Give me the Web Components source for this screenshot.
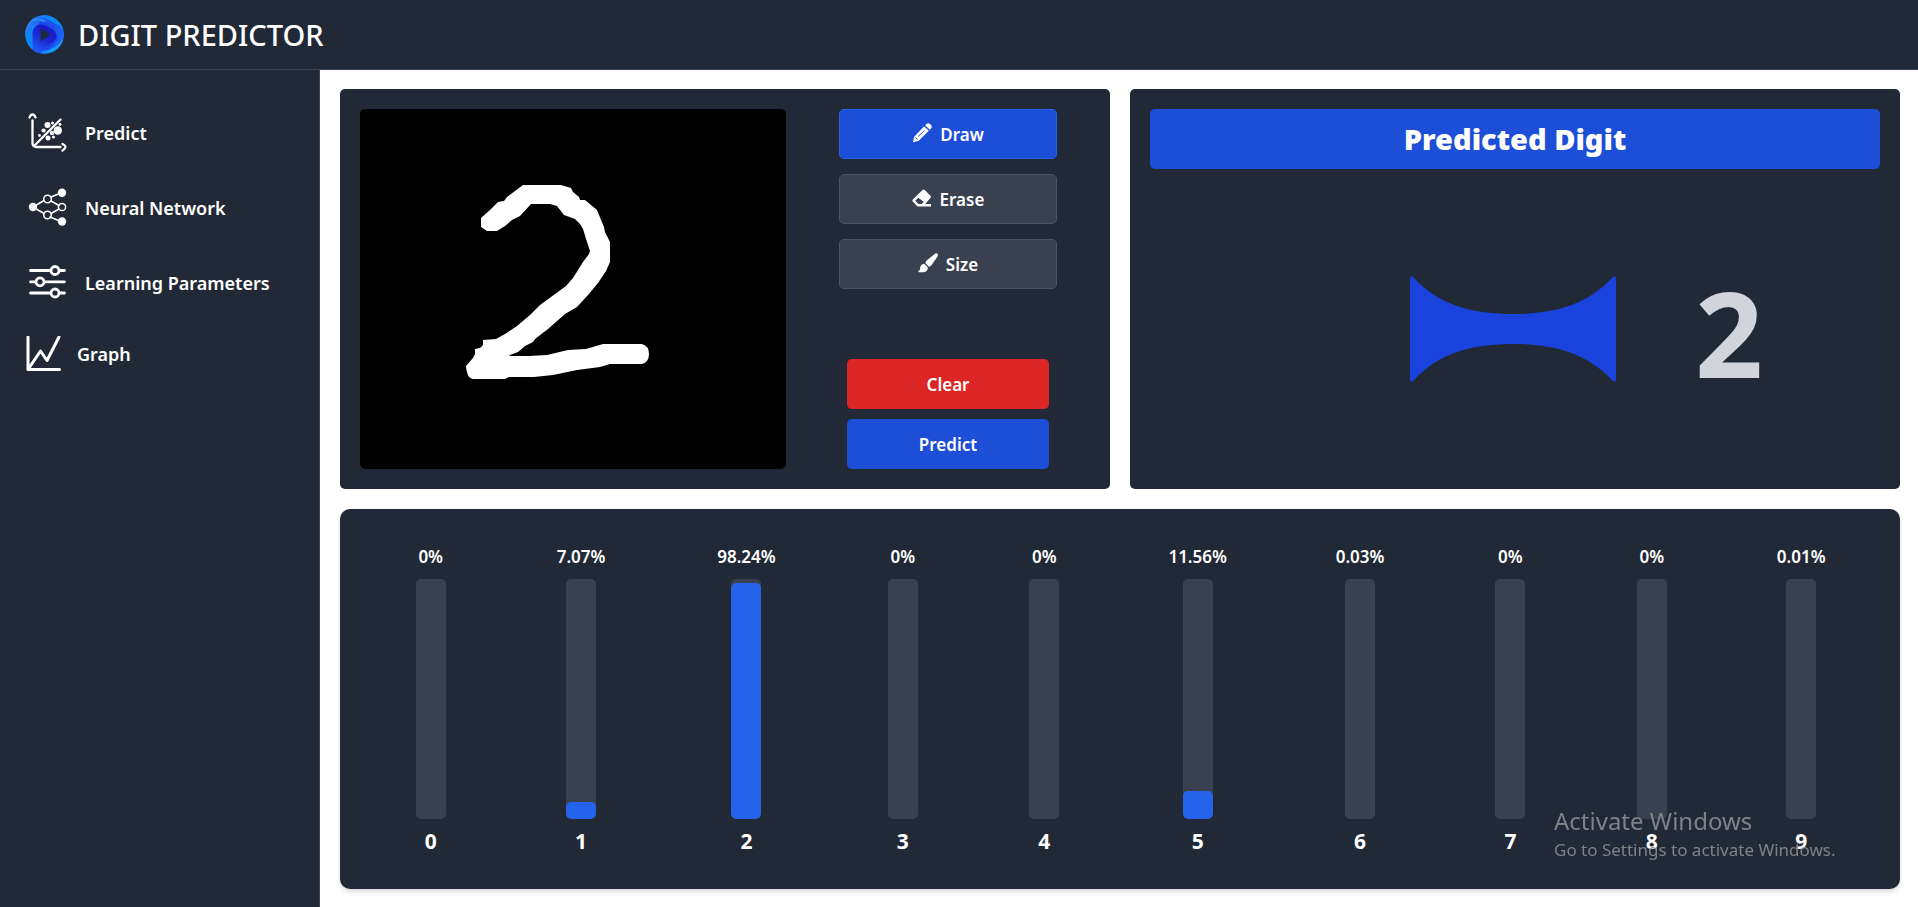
<!DOCTYPE html>
<html lang="en">
<head>
<meta charset="utf-8">
<meta name="viewport" content="width=device-width, initial-scale=1">
<title>Digit Predictor</title>
<style>
  html, body { margin: 0; min-height: 100%; background: #fff; }
  body { font-family: "Noto Sans", "Open Sans", sans-serif; color: #fff; }
</style>
</head>
<body>
<digit-app></digit-app>
<script>
const define = (name, html, setup) => customElements.define(name, class extends HTMLElement {
  constructor() {
    super();
    this.attachShadow({ mode: 'open' }).innerHTML = html;
  }
  connectedCallback() { if (setup) setup(this, this.shadowRoot); }
});

define('app-header', `
<style>
  :host { display: flex; align-items: center; gap: 14px; height: 70px; box-sizing: border-box;
    padding: 0 24px; background: #212936; border-bottom: 1px solid #374151; }
  svg { width: 40px; height: 40px; flex: none; }
  h1 { margin: 0; font-size: 29px; line-height: 40px; font-weight: 500; white-space: nowrap; }
</style>
<svg viewBox="0 0 40 40" aria-hidden="true">
  <defs>
    <linearGradient id="a" x1="0" y1="0" x2="1" y2="1"><stop offset="0" stop-color="#1c7cf6"/><stop offset=".4" stop-color="#0a86fb"/><stop offset="1" stop-color="#0a93ff"/></linearGradient>
    <linearGradient id="b" gradientUnits="userSpaceOnUse" x1="6" y1="8" x2="36" y2="24"><stop offset="0" stop-color="#2a7bf2"/><stop offset=".5" stop-color="#1d4bee"/><stop offset="1" stop-color="#1b62f5"/></linearGradient>
    <linearGradient id="c" gradientUnits="userSpaceOnUse" x1="12" y1="36" x2="28" y2="14"><stop offset="0" stop-color="#1d5cf2"/><stop offset=".6" stop-color="#1b22cf"/><stop offset="1" stop-color="#1a18c4"/></linearGradient>
    <clipPath id="d"><circle cx="20.500" cy="19.500" r="19.500"/></clipPath>
  </defs>
  <g clip-path="url(#d)" fill="none" stroke-linecap="round" stroke-linejoin="round">
    <circle cx="20.500" cy="19.500" r="19.500" fill="url(#a)"/>
    <path d="M2 13Q9 2 22 8L33 14Q39 20 33 26L16 36" stroke="url(#b)" stroke-width="8"/>
    <path d="M12 18v20q8 0 14-5l8-8-4-14-14-5z" fill="#1b48ea"/>
    <path d="M12.500 34V18q1-6 7-4l7 4q4 3 0 6l-9 6-4 5" stroke="url(#c)" stroke-width="8"/>
    <path d="M1 11Q8 1 20 6M39 25Q32 37 18 37" stroke="#20a8ff" stroke-width="2" opacity=".6"/>
  </g>
  <path d="M16.500 14v12.500l10-6.500q-4-5-10-6z" fill="#1d2a40"/>
</svg>
<h1><slot></slot></h1>
`);

define('nav-link', `
<style>
  :host { display: block; }
  a { display: flex; align-items: center; gap: 18px; height: 75px; color: #fff; text-decoration: none;
    font-size: 18px; line-height: 28px; font-weight: 600; white-space: nowrap; }
  :host([compact]) a { height: 68px; gap: 16px; }
  :host([compact]) { margin-left: -3px; }
</style>
<a href="#"><slot name="icon"></slot><slot></slot></a>
`);

define('app-sidebar', `
<style>
  :host { display: block; box-sizing: border-box; background: #212936; border-right: 1px solid #374151; padding: 25px 20px 20px 28px; }
  svg { width: 39px; height: 39px; display: block; flex: none; fill: none; stroke: #fff; stroke-linecap: round; stroke-linejoin: round; }
  .f { fill: #fff; stroke: none; }
  .graph { width: 36px; height: 36px; }
</style>
<nav>
  <nav-link><svg slot="icon" viewBox="0 0 39 39" stroke-width="2.300" aria-hidden="true">
    <path d="M1.500 4.500Q2.500 1.500 4.500 1.500T7.500 4.500M4.500 7.500V30c0 3 1 4 4 4h24M34.500 31Q37.500 32.500 37.500 34T34.500 37.500M6 33 32.500 6.500"/>
    <g class="f"><circle cx="19.500" cy="12" r="3"/><circle cx="15.500" cy="17.500" r="2.100"/><circle cx="11.500" cy="22.500" r="1.400"/><circle cx="24.500" cy="10" r="1.500"/><circle cx="29.800" cy="17.500" r="4.200"/><circle cx="32" cy="11.500" r="1.400"/><circle cx="20" cy="25" r="2.500"/><circle cx="25.500" cy="24" r="1.500"/><circle cx="24" cy="20" r="2.200"/></g>
  </svg>Predict</nav-link>
  <nav-link><svg slot="icon" viewBox="0 0 39 39" stroke-width="1.500" aria-hidden="true">
    <path d="m5 19 11-6.500M23 9l10-4M5 19l11 6.500M22 29l11 4.500M23 13l8 4.500M23 25.500l8-4.500"/>
    <circle cx="19.500" cy="11" r="3.800"/><circle cx="19.500" cy="27" r="3.800"/><circle cx="34" cy="19" r="3.600"/>
    <g class="f"><circle cx="5" cy="19" r="4.200"/><circle cx="34" cy="4.800" r="4.200"/><circle cx="34" cy="33.500" r="4.200"/></g>
  </svg>Neural Network</nav-link>
  <nav-link><svg slot="icon" viewBox="0 0 39 39" stroke-width="2.800" aria-hidden="true">
    <path d="M2.500 7.500H22M32 7.500h4.500M2.500 18.800H7M17 18.800h19.500M2.500 30H22M32 30h4.500"/>
    <circle cx="27" cy="7.500" r="4"/><circle cx="12" cy="18.800" r="4"/><circle cx="27" cy="30" r="4"/>
  </svg>Learning Parameters</nav-link>
  <nav-link compact><svg slot="icon" class="graph" viewBox="0 0 36 36" stroke-width="3" aria-hidden="true">
    <path d="M3 1v32.500h31.500M3 33.500l12.500-18.500L22 24.500 34 1"/>
  </svg>Graph</nav-link>
</nav>
`);

define('tool-button', `
<style>
  :host { display: block; }
  button { display: flex; width: 100%; height: 50px; box-sizing: border-box; align-items: center; justify-content: center; gap: 8px;
    border: 1px solid #4b5563; border-radius: 5px; background: #394150; color: #fff;
    font: 600 17px/24px "Noto Sans", "Open Sans", sans-serif; padding: 2px 16px 0; cursor: pointer; }
  :host([tone=active]) button { background: #1d4ed8; border-color: #2563eb; }
  :host([tone=primary]) button { background: #1d4ed8; border: 0; }
  :host([tone=danger]) button { background: #dc2626; border: 0; }
</style>
<button type="button"><slot name="icon"></slot><slot></slot></button>
`);

define('draw-panel', `
<style>
  :host { display: grid; grid-template-columns: 3fr 2fr; gap: 20px; padding: 20px; box-sizing: border-box; height: 400px;
    background: #212936; border-radius: 5px; }
  .board { background: #000; border-radius: 5px; overflow: hidden; }
  .board svg { display: block; width: 100%; height: 100%; }
  .tools { display: flex; flex-direction: column; gap: 15px; padding: 0 33px; }
  .actions { display: flex; flex-direction: column; gap: 10px; padding: 0 8px; margin-top: auto; }
  .i { width: 20px; height: 20px; margin-bottom: 5px; fill: #fff; flex: none; }
</style>
<div class="board"><svg viewBox="0 0 426 360" role="img" aria-label="Hand-drawn two" fill="#fff">
  <path d="M121 109l9-8 8-8 6-1 3-4 16-12h38l10 3 2 4 6 5 1 3h5l12 10 7 17 1 5 5 10v20l-4 9-8 12-10 12-11 12-12 7-17 15-13 10-2 3-8 4-7 6-8 3-1 1h20l18-1 21-5 18-1 17-5h39q7 2 7 10t-7 10h-32l-10 3-23 3-24 5-19 2h-25l-4 2h-32q-5-1-6-7-1-3-1-6l7-8 2-4v-5l5-1 3-3v-5l13-1 9-5 12-8 13-11 10-10 26-19 7-8 10-16 6-8 1-3-3-9-4-13-3-5-5-5-11-4-7-9-7-2h-19l-11 12-8 4-7 6-8 5h-10l-6-4z"/>
</svg></div>
<div class="tools">
  <tool-button tone="active"><svg slot="icon" class="i" viewBox="0 0 20 20" aria-hidden="true"><path d="M13.200 2.200 14.500 1c1-1 2.600-.9 3.500.1l1 1c1 1 .9 2.500 0 3.400l-1.300 1.300zM12.200 3.200l4.600 4.600L7 17.400c-.3.300-.7.500-1.100.6L1 19.300l1-5c.1-.4.300-.8.600-1.100z"/><path d="m6.200 13.600 6.200-6.200M3.500 14.500l2 2" stroke="#1d4ed8" stroke-width="1"/></svg>Draw</tool-button>
  <tool-button><svg slot="icon" class="i" viewBox="0 0 20 20" aria-hidden="true"><path fill-rule="evenodd" d="M10.200 2.300a2 2 0 0 1 2.800 0l5.200 5.200a2 2 0 0 1 0 2.800L13.200 16H19v2.500H5.500L1.100 14a2 2 0 0 1 0-2.800zM6.400 9.800 3.300 12.700 6.400 16h3.200l2.300-2z"/></svg>Erase</tool-button>
  <tool-button><svg slot="icon" class="i" viewBox="0 0 20 20" aria-hidden="true"><path d="M19.300.7c.8.700.9 1.800.2 2.800l-5.700 8.200c-.8 1.100-1.600 1.600-2.900 2L7.300 10c.4-1.200 1-2.100 2-2.900L16.700 1c1-.8 1.900-.9 2.600-.3zM6.200 10.800l3.600 3.500c.3 2.800-1.600 5-4.600 5H1.500c-1.500 0-1.500-1.800-.3-1.900.7-.1.800-.7.800-1.400 0-3 1.700-4.900 4.200-5.200z"/></svg>Size</tool-button>
  <div class="actions">
    <tool-button tone="danger">Clear</tool-button>
    <tool-button tone="primary">Predict</tool-button>
  </div>
</div>
`);

define('result-panel', `
<style>
  :host { display: flex; flex-direction: column; padding: 20px; box-sizing: border-box; height: 400px; background: #212936; border-radius: 5px; }
  h2 { margin: 0; height: 60px; line-height: 60px; font-size: 29px; font-weight: 900; text-align: center; background: #1d4ed8; border-radius: 5px; }
  .body { flex: 1; display: grid; grid-template-columns: 1fr 210px 1fr; align-items: center; padding-top: 26px; }
  svg { grid-column: 2; width: 210px; height: 106px; display: block; margin-bottom: 6px; }
  output { font-size: 119px; line-height: 164px; font-weight: 700; color: #d1d5db; padding-left: 75px; }
</style>
<h2>Predicted Digit</h2>
<div class="body">
  <svg viewBox="0 0 210 106" aria-hidden="true"><path d="M0 1.500Q2-1 4 2C30 30 64 38 103 38S176 30 202 2q2-3 4-.5v103q-2 2.500-4-.5C176 76 142 68 103 68S30 76 4 104q-2 3-4 .5z" fill="#1a42dc"/></svg>
  <output>2</output>
</div>
`);

define('digit-bar', `
<style>
  :host { display: flex; flex-direction: column; align-items: center; white-space: nowrap; }
  .value { font-size: 17px; line-height: 24px; font-weight: 600; }
  .track { width: 30px; height: 240px; margin: 10px 0 8px; border-radius: 5px; background: #394150; display: flex; align-items: flex-end; overflow: hidden; }
  .fill { width: 100%; background: #2563eb; border-radius: 5px; }
  .digit { font-size: 21px; line-height: 28px; font-weight: 700; }
</style>
<div class="value"></div><div class="track"><div class="fill"></div></div><div class="digit"><slot></slot></div>
`, (el, root) => {
  const v = el.getAttribute('value');
  root.querySelector('.value').textContent = v + '%';
  root.querySelector('.fill').style.height = (v < 1 ? 0 : v) + '%';
});

define('chart-panel', `
<style>
  :host { display: grid; grid-template-columns: 30px 48px 60px 30px 30px 54px 48px 30px 30px 46px; justify-content: space-around; justify-items: center; align-items: start;
    box-sizing: border-box; height: 380px; padding: 36px 20px 20px;
    background: #212936; border-radius: 10px; box-shadow: 0 4px 6px -1px rgba(0,0,0,.1), 0 2px 4px -1px rgba(0,0,0,.1); }
</style>
<digit-bar value="0">0</digit-bar><digit-bar value="7.07">1</digit-bar><digit-bar value="98.24">2</digit-bar><digit-bar value="0">3</digit-bar><digit-bar value="0">4</digit-bar><digit-bar value="11.56">5</digit-bar><digit-bar value="0.03">6</digit-bar><digit-bar value="0">7</digit-bar><digit-bar value="0">8</digit-bar><digit-bar value="0.01">9</digit-bar>
`);

define('system-watermark', `
<style>
  :host { position: fixed; right: 80px; bottom: 45px; width: 284px; color: #8a8c8f; opacity: .9; pointer-events: none; white-space: nowrap; }
  p { margin: 0; }
  .t { font-size: 24px; line-height: 34px; }
  .s { font-size: 17px; line-height: 24px; }
</style>
<p class="t">Activate Windows</p>
<p class="s">Go to Settings to activate Windows.</p>
`);

define('digit-app', `
<style>
  :host { display: grid; grid-template: auto 1fr / 320px 1fr; min-height: 100vh; }
  app-header { grid-column: 1 / -1; }
  main { display: grid; grid-template-columns: 1fr 1fr; align-content: start; gap: 20px; padding: 19px 18px 18px 20px; min-width: 0; }
  chart-panel { grid-column: 1 / -1; }
</style>
<app-header>DIGIT PREDICTOR</app-header>
<app-sidebar></app-sidebar>
<main>
  <draw-panel></draw-panel>
  <result-panel></result-panel>
  <chart-panel></chart-panel>
</main>
<system-watermark></system-watermark>
`);
</script>
</body>
</html>
